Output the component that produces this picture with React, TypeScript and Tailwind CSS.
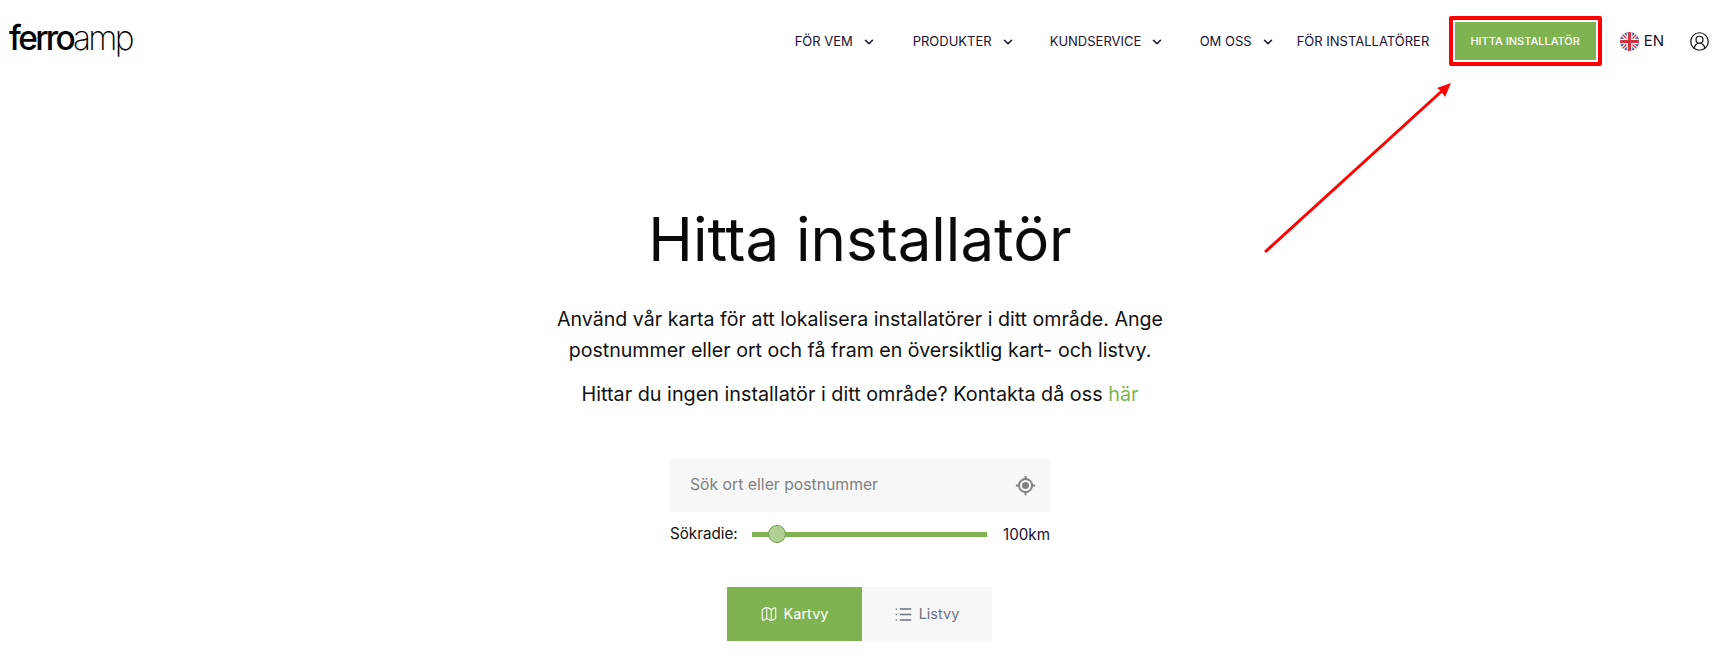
import { ChevronDown, CircleUserRound, Map, List } from 'lucide-react'

const navItems = [
  { label: 'FÖR VEM', width: 'w-[118px]' },
  { label: 'PRODUKTER', width: 'w-[137px]' },
  { label: 'KUNDSERVICE', width: 'w-[150px]' },
  { label: 'OM OSS', width: 'w-[97px]' },
]

function UkFlag() {
  return (
    <svg width="19" height="19" viewBox="0 0 20 20" aria-hidden>
      <defs>
        <clipPath id="flag-circle">
          <circle cx="10" cy="10" r="10" />
        </clipPath>
      </defs>
      <g clipPath="url(#flag-circle)">
        <rect width="20" height="20" fill="#2b4a9b" />
        <path d="M0 0L20 20M20 0L0 20" stroke="#f2f2f2" strokeWidth="4" />
        <path d="M0 0L20 20M20 0L0 20" stroke="#d2343f" strokeWidth="1.4" />
        <path d="M10 0V20M0 10H20" stroke="#f2f2f2" strokeWidth="6" />
        <path d="M10 0V20M0 10H20" stroke="#d2343f" strokeWidth="3.4" />
      </g>
    </svg>
  )
}

function LocateIcon() {
  return (
    <svg width="21" height="21" viewBox="0 0 24 24" fill="none" stroke="#808080" strokeWidth="2.2" aria-hidden>
      <circle cx="12" cy="12" r="7.5" />
      <circle cx="12" cy="12" r="4" fill="#808080" stroke="none" />
      <path d="M12 1V4.5M12 19.5V23M1 12H4.5M19.5 12H23" />
    </svg>
  )
}

function Header() {
  return (
    <header className="flex items-center h-[82px] pl-[9px] pr-[16px] bg-white">
      <div className="text-[33.5px] leading-none tracking-[-0.08em] text-black -mt-1">
        <span className="font-medium">ferro</span>
        <span className="font-extralight">amp</span>
      </div>
      <nav className="ml-auto flex items-center text-[13px] text-[#1a1033] mt-[1px]">
        {navItems.map(item => (
          <a key={item.label} className={`flex items-center gap-[9px] ${item.width}`}>
            {item.label}
            <ChevronDown size={14} strokeWidth={2.6} aria-hidden />
          </a>
        ))}
        <a className="w-[152px]">FÖR INSTALLATÖRER</a>
      </nav>
      <div className="border-[4px] border-[#ff0000] rounded-[2px] p-[2px] flex">
        <a className="flex items-center justify-center w-[141px] h-[38px] bg-[#7fb351] text-white text-[11px] font-medium">
          HITTA INSTALLATÖR
        </a>
      </div>
      <div className="flex items-center gap-[5px] ml-[18px] text-[15px] text-[#1a1033]">
        <UkFlag />
        EN
      </div>
      <CircleUserRound size={21} strokeWidth={1.4} className="ml-[25px] text-[#111]" aria-hidden />
    </header>
  )
}

function SearchBox() {
  return (
    <div className="w-[380px] mt-[48px]">
      <div className="flex items-center justify-between h-[54px] pl-5 pr-[14px] rounded-[3px] bg-[#f7f7f7]">
        <span className="text-[15.75px] text-[#808080]">Sök ort eller postnummer</span>
        <LocateIcon />
      </div>
      <div className="flex items-center mt-[10px] h-[24px] text-[15.2px]">
        <span className="text-[#111]">Sökradie:</span>
        <div className="relative ml-[14px] w-[235px] h-[5px] bg-[#7fb351]">
          <span className="absolute left-[16px] top-[-7px] w-[18px] h-[18px] rounded-full bg-[#b1d094] border border-[#6f9c47]" />
        </div>
        <span className="ml-auto text-[#1a1033] mt-[2px]">100km</span>
      </div>
    </div>
  )
}

function ViewTabs() {
  return (
    <div className="flex mt-[41px] mr-[2px] h-[54px] text-[14.5px]">
      <button type="button" className="flex items-center justify-center gap-[6px] w-[135px] bg-[#7fb351] text-white">
        <Map size={18} strokeWidth={1.4} aria-hidden />
        Kartvy
      </button>
      <button type="button" className="flex items-center justify-center gap-[6px] w-[130px] bg-[#f7f7f7] text-[#6b7280]">
        <List size={19} strokeWidth={2} aria-hidden />
        Listvy
      </button>
    </div>
  )
}

export default function App() {
  return (
    <div className="relative h-[659px] overflow-hidden bg-white font-['Inter',sans-serif]">
      <Header />
      <main className="flex flex-col items-center pr-[6px]">
        <h1 className="mt-[119px] text-[60px] leading-[76px] font-normal text-[#0a0a0a]">Hitta installatör</h1>
        <p className="mt-[27px] w-[640px] text-center text-[19.6px] leading-[31px] text-[#111]">
          Använd vår karta för att lokalisera installatörer i ditt område. Ange postnummer eller ort och få fram en översiktlig kart- och listvy.
        </p>
        <p className="mt-[13px] text-[19.8px] leading-[31px] text-[#111]">
          Hittar du ingen installatör i ditt område? Kontakta då oss <a className="text-[#7fb351]">här</a>
        </p>
        <SearchBox />
        <ViewTabs />
      </main>
      {/* annotation arrow drawn over the page */}
      <svg className="absolute left-0 top-0 pointer-events-none" width="1726" height="659" aria-hidden>
        <line x1="1265" y1="252" x2="1443" y2="90" stroke="#ff0000" strokeWidth="3" />
        <polygon points="1451,83 1437,88 1441,91 1445,97" fill="#ff0000" />
      </svg>
    </div>
  )
}
